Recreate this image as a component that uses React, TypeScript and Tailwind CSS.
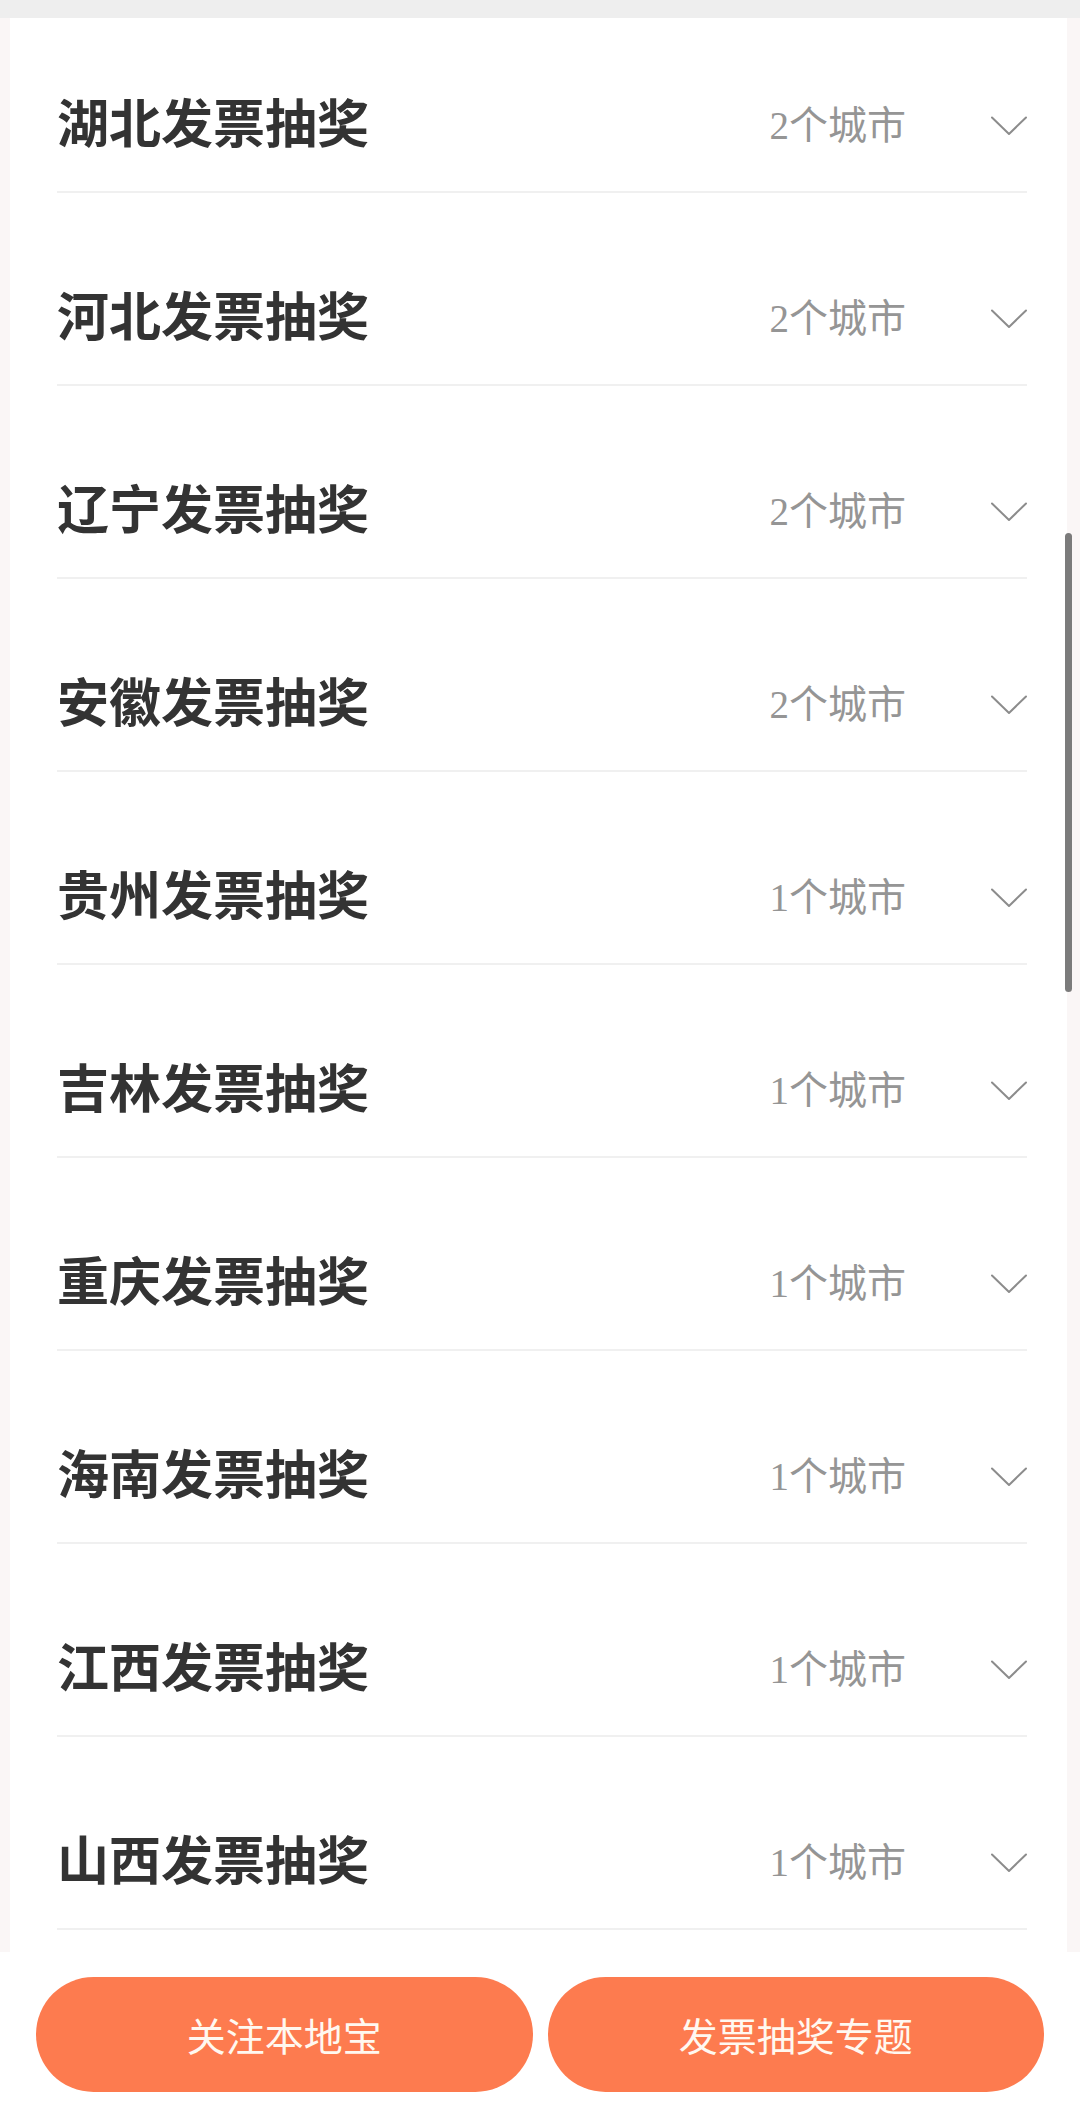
import React from 'react';

const provinces = [
  { name: '湖北', count: 2 },
  { name: '河北', count: 2 },
  { name: '辽宁', count: 2 },
  { name: '安徽', count: 2 },
  { name: '贵州', count: 1 },
  { name: '吉林', count: 1 },
  { name: '重庆', count: 1 },
  { name: '海南', count: 1 },
  { name: '江西', count: 1 },
  { name: '山西', count: 1 },
];

function Chevron() {
  return (
    <svg width="36" height="20" viewBox="0 0 36 20" fill="none">
      <polyline points="1,1.5 18,18 35,1.5" stroke="#8c8c8c" strokeWidth="2" strokeLinejoin="round" strokeLinecap="round" />
    </svg>
  );
}

function ProvinceRow({ name, count, first }: { name: string; count: number; first: boolean }) {
  return (
    <div className={first ? 'pt-[42px]' : 'pt-[60px]'}>
      <div className="h-[131px] flex items-center justify-between">
        <span className="mb-[10px] text-[52px] font-bold text-[#333333] leading-none">{name}发票抽奖</span>
        <div className="flex items-center gap-[85px]">
          <span className="text-[39px] text-[#959595] leading-none font-['Liberation_Serif','Noto_Sans_CJK_SC',serif]">
            {count}个城市
          </span>
          <Chevron />
        </div>
      </div>
      <div className="h-[2px] bg-[#f0f0f0]" />
    </div>
  );
}

export default function App() {
  return (
    <div className="relative h-[2113px] w-[1080px] flex flex-col bg-[#faf6f6] overflow-hidden font-['Noto_Sans_CJK_SC','Noto_Sans',sans-serif]">
      {/* scrolled-past header strip */}
      <div className="h-[18px] bg-[#eeeeee] shrink-0" />

      <div className="flex-1 min-h-0 overflow-hidden ml-[10px] mr-[13px] bg-white">
        <div className="pl-[47px] pr-[40px]">
          {provinces.map((p, i) => (
            <ProvinceRow key={p.name} name={p.name} count={p.count} first={i === 0} />
          ))}
        </div>
      </div>

      {/* bottom action bar */}
      <div className="h-[161px] shrink-0 bg-white pt-[25px] px-[36px] grid grid-cols-2 gap-[15px] items-start">
        <button className="h-[115px] rounded-full bg-[#fd7b4f] text-[#fff8f0] text-[39px]">关注本地宝</button>
        <button className="h-[115px] rounded-full bg-[#fd7b4f] text-[#fff8f0] text-[39px]">发票抽奖专题</button>
      </div>

      {/* scrollbar thumb */}
      <div className="absolute left-[1065px] top-[533px] w-[7px] h-[459px] rounded-full bg-[#7b7b7b]" />
    </div>
  );
}
